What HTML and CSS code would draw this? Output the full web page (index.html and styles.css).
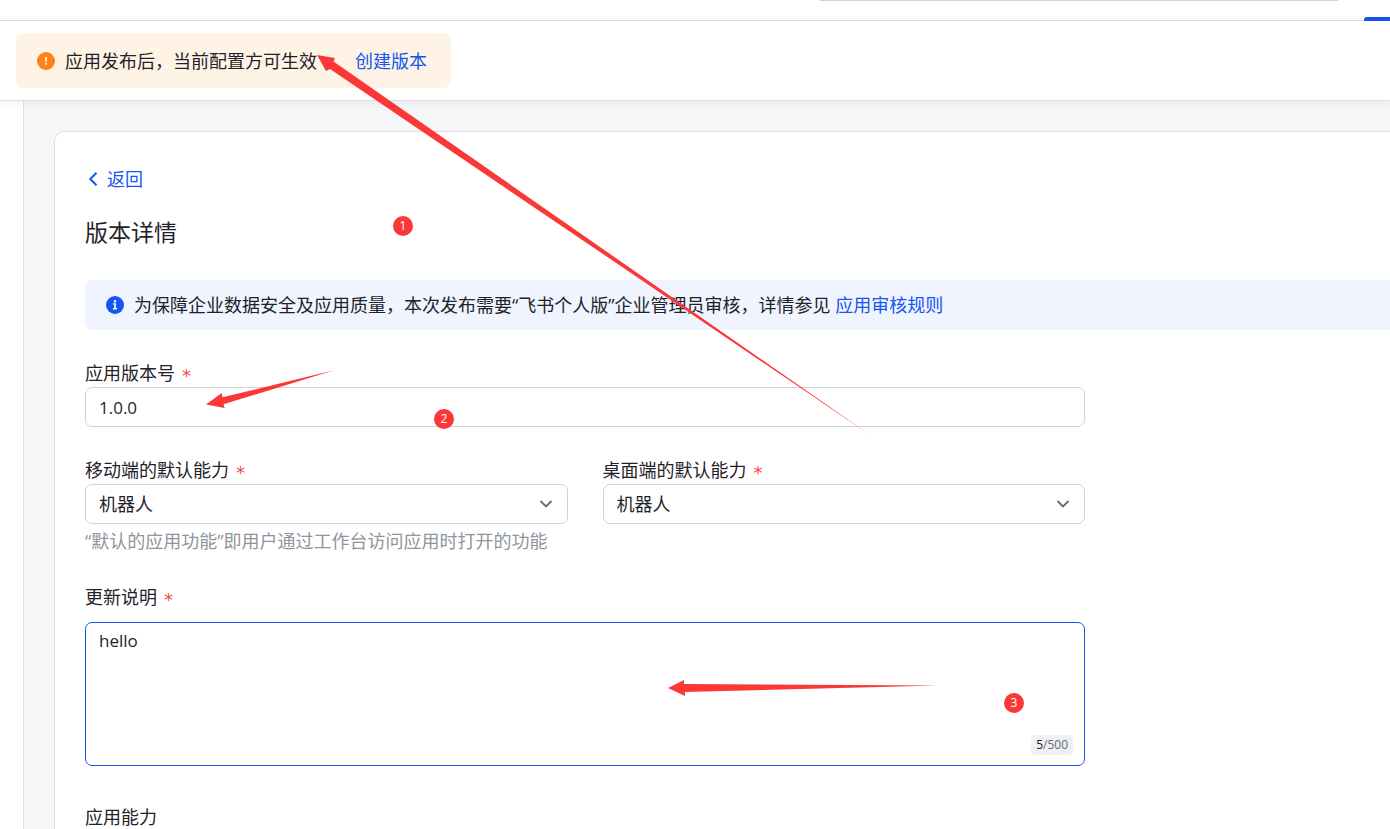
FILE: index.html
```html
<!DOCTYPE html>
<html lang="zh-CN">
<head>
<meta charset="utf-8">
<title>版本详情</title>
<link rel="stylesheet" href="styles.css">
</head>
<body>
<header class="topbar">
  <div class="search-edge"></div>
  <div class="active-tab"></div>
</header>
<div class="notice-bar">
  <div class="notice">
    <svg class="status-icon" viewBox="0 0 18 18" aria-hidden="true"><circle cx="9" cy="9" r="9" fill="#ff811a"/><path d="M8.1 5h1.8l-.2 5H8.3z" fill="#fff"/><circle cx="9" cy="12" r="1" fill="#fff"/></svg>
    <span class="notice-text">应用发布后，当前配置方可生效</span>
    <a class="link" href="#create">创建版本</a>
  </div>
</div>
<div class="workspace">
  <aside class="sidebar"></aside>
  <main class="content">
    <section class="card">
      <a class="link back" href="#back">
        <svg class="back-icon" viewBox="0 0 18 18" aria-hidden="true"><path d="M11.5 2.8 5.3 9l6.2 6.2" fill="none" stroke="#1456f0" stroke-width="2"/></svg>
        <span>返回</span>
      </a>
      <h1 class="title">版本详情</h1>
      <div class="info">
        <svg class="status-icon" viewBox="0 0 18 18" aria-hidden="true"><circle cx="9" cy="9" r="9" fill="#1456f0"/><circle cx="9" cy="5.3" r="1.2" fill="#fff"/><path d="M7 7.3h2.900v4.800H11v1.300H7v-1.300h1.200V8.600H7z" fill="#fff"/></svg>
        <p class="info-text">为保障企业数据安全及应用质量，本次发布需要“飞书个人版”企业管理员审核，详情参见 <a class="link" href="#rules">应用审核规则</a></p>
      </div>
      <form class="form">
        <div class="field">
          <label class="label" for="version">应用版本号<span class="required">*</span></label>
          <input class="control latin" id="version" type="text" value="1.0.0">
        </div>
        <div class="pair">
          <div class="field">
            <label class="label" for="mobile">移动端的默认能力<span class="required">*</span></label>
            <div class="select-box">
              <select class="control" id="mobile"><option>机器人</option></select>
              <svg class="chevron" viewBox="0 0 14 14" aria-hidden="true"><path d="m1.5 4 5.5 5.5L12.500 4" fill="none" stroke="#646a73" stroke-width="1.8"/></svg>
            </div>
            <p class="hint">“默认的应用功能”即用户通过工作台访问应用时打开的功能</p>
          </div>
          <div class="field">
            <label class="label" for="desktop">桌面端的默认能力<span class="required">*</span></label>
            <div class="select-box">
              <select class="control" id="desktop"><option>机器人</option></select>
              <svg class="chevron" viewBox="0 0 14 14" aria-hidden="true"><path d="m1.5 4 5.5 5.5L12.500 4" fill="none" stroke="#646a73" stroke-width="1.8"/></svg>
            </div>
          </div>
        </div>
        <div class="field">
          <label class="label" for="notes">更新说明<span class="required">*</span></label>
          <div class="notes-box">
            <textarea class="control latin notes-input" id="notes">hello</textarea>
            <span class="counter"><span class="count">5</span>/500</span>
          </div>
        </div>
        <h2 class="label abilities">应用能力</h2>
      </form>
    </section>
  </main>
</div>
<svg class="arrows" width="1390" height="829" viewBox="0 0 1390 829" fill="#fb3838" aria-hidden="true">
  <path d="M317 55 335 58 333.500 61.500 871.500 436 330 69 326 71z"/>
  <path d="M206 404.500 221.700 393 222.500 397.300 334 370.300 223.500 404.300 224.700 408z"/>
  <path d="M668 688 684 680V684L938 685.500 685 692V696z"/>
</svg>
<span class="pin pin-1">1</span>
<span class="pin pin-2">2</span>
<span class="pin pin-3">3</span>
</body>
</html>
```
FILE: styles.css
```css
* { box-sizing: border-box; }

body {
  position: relative;
  display: flex;
  flex-direction: column;
  height: 100vh;
  margin: 0;
  overflow: hidden;
  background: #fff;
  color: #1f2329;
  font-family: "Open Sans", "Noto Sans CJK SC", sans-serif;
  font-size: 18px;
  line-height: 26px;
}

h1, h2, p { margin: 0; font-weight: 400; }

.link { color: #1456f0; text-decoration: none; }

.topbar {
  display: flex;
  flex: none;
  justify-content: flex-end;
  height: 21px;
  border-bottom: 1px solid #dee0e3;
}

.search-edge {
  width: 518px;
  height: 1px;
  margin-right: 26px;
  background: #d0d3d6;
}

.active-tab {
  align-self: flex-end;
  width: 26px;
  height: 4px;
  margin-bottom: -1px;
  border-radius: 3px 0 0 0;
  background: #1456f0;
}

.notice-bar {
  z-index: 1;
  display: flex;
  flex: none;
  padding: 12px 16px;
  border-bottom: 1px solid #dee0e3;
  background: #fff;
  box-shadow: 0 2px 10px rgba(31, 35, 41, 0.06);
}

.notice {
  display: flex;
  align-items: center;
  height: 55px;
  padding: 0 24px 0 21px;
  border-radius: 8px;
  background: #fff3e5;
}

.status-icon { flex: none; width: 18px; height: 18px; margin-right: 10px; }

.notice-text { margin-right: 38px; }

.workspace { display: flex; flex: 1; min-height: 0; }

.sidebar { width: 24px; border-right: 1px solid #dee0e3; }

.content {
  flex: 1;
  min-width: 0;
  padding: 30px 0 0 30px;
  overflow: hidden;
  background: #f5f6f7;
}

.card {
  padding: 34px 0 30px 30px;
  border: 1px solid #dee0e3;
  border-right: 0;
  border-radius: 10px 0 0 0;
  background: #fff;
}

.back { display: flex; align-items: center; gap: 4px; }

.back-icon { width: 18px; height: 18px; }

.title { margin-top: 24px; font-size: 23px; line-height: 32px; }

.info {
  display: flex;
  align-items: center;
  height: 50px;
  margin-top: 32px;
  padding-left: 21px;
  border-radius: 8px 0 0 8px;
  background: #f0f4ff;
}

.form { max-width: 1000px; }

.field { margin-top: 30px; }

.label { display: flex; font-size: 18px; line-height: 27px; }

.required {
  padding-top: 4px;
  margin-left: 7px;
  color: #f54a45;
  font-family: "DejaVu Sans", sans-serif;
  line-height: 23px;
}

.control {
  display: block;
  width: 100%;
  height: 40px;
  padding: 0 13px;
  border: 1px solid #d0d3d6;
  border-radius: 7px;
  outline: 0;
  background: #fff;
  color: inherit;
  font: inherit;
  appearance: none;
}

.latin { font-size: 17px; }

.pair { display: grid; grid-template-columns: 1fr 1fr; column-gap: 35px; }

.select-box { position: relative; }

.chevron {
  position: absolute;
  top: 13px;
  right: 15px;
  width: 14px;
  height: 14px;
  pointer-events: none;
}

.hint { margin-top: 4px; color: #8f959e; white-space: nowrap; }

.notes-box { position: relative; margin-top: 11px; }

.notes-input {
  height: 144px;
  padding: 5px 13px;
  border-color: #1456f0;
  resize: none;
}

.counter {
  position: absolute;
  right: 12px;
  bottom: 11px;
  padding: 0 5px;
  border-radius: 5px;
  background: #eff0f1;
  color: #646a73;
  font-size: 12px;
  line-height: 20px;
}

.count { color: #1f2329; }

.abilities { margin-top: 38px; }

.arrows { position: absolute; top: 0; left: 0; z-index: 2; pointer-events: none; }

.pin {
  position: absolute;
  z-index: 3;
  width: 20px;
  height: 20px;
  border-radius: 50%;
  background: #fb3838;
  color: #fff;
  font-size: 12px;
  line-height: 20px;
  text-align: center;
}

.pin-1 { top: 216px; left: 393px; }
.pin-2 { top: 409px; left: 434px; }
.pin-3 { top: 693px; left: 1004px; }
```
